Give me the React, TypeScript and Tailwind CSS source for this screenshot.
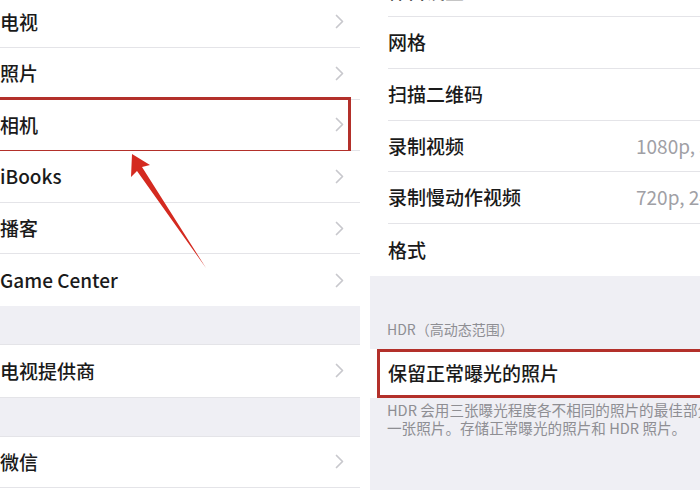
import React from "react";

const font = { fontFamily: '"Noto Sans CJK SC", "Noto Sans", sans-serif' };

function Chevron() {
  return (
    <svg width="9" height="15" viewBox="0 0 9 15" className="shrink-0">
      <polyline points="1.5,1.5 7.5,7.5 1.5,13.5" fill="none" stroke="#c8c8cd" strokeWidth="1.7" strokeLinecap="round" strokeLinejoin="round" />
    </svg>
  );
}

function LeftRow({ label, boxed = false, last = false }: { label: string; boxed?: boolean; last?: boolean }) {
  return (
    <div className={"relative flex h-[51.6px] items-center justify-between bg-white pr-[16px] " + (last ? "" : "border-b border-[#e4e4e8]")}>
      <span className="text-[19px] font-medium text-[#1a1a1a] whitespace-nowrap">{label}</span>
      <Chevron />
      {boxed && (
        <div className="absolute left-[-4px] right-[9px] top-[-3px] bottom-[-3px] border-[3px] border-[#b3302a]" />
      )}
    </div>
  );
}

function RightRow({ label, value }: { label: string; value?: string }) {
  return (
    <div className="flex h-[51.7px] items-center bg-white pl-[18px]">
      <div className="flex h-full flex-1 items-center border-b border-[#e4e4e8]">
        <span className="w-[248px] shrink-0 text-[19px] font-medium text-[#1a1a1a] whitespace-nowrap">{label}</span>
        {value && <span className="text-[19px] text-[#a0a0a5] whitespace-nowrap">{value}</span>}
      </div>
    </div>
  );
}

export default function App() {
  return (
    <div className="relative flex h-[490px] w-[700px] overflow-hidden bg-white" style={font}>
      {/* Left panel */}
      <div className="w-[360px] shrink-0 overflow-hidden">
        <div className="mt-[-3.5px] flex flex-col">
          <LeftRow label="电视" />
          <LeftRow label="照片" />
          <LeftRow label="相机" boxed />
          <LeftRow label="iBooks" />
          <LeftRow label="播客" />
          <LeftRow label="Game Center" last />
          <div className="h-[39px] bg-[#efeff4] border-b border-[#e4e4e8]" />
          <LeftRow label="电视提供商" last />
          <div className="h-[40px] bg-[#efeff4] border-t border-b border-[#e4e4e8]" />
          <LeftRow label="微信" />
        </div>
      </div>

      <div className="w-[10px] shrink-0 bg-white" />

      {/* Right panel */}
      <div className="flex-1 overflow-hidden bg-[#efeff4]">
        <div className="mt-[-34.5px] flex flex-col">
          <RightRow label="保留设置" />
          <RightRow label="网格" />
          <RightRow label="扫描二维码" />
          <RightRow label="录制视频" value="1080p, 30 fps" />
          <RightRow label="录制慢动作视频" value="720p, 240 fps" />
          <div className="flex h-[51.7px] items-center bg-white pl-[18px]">
            <span className="text-[19px] font-medium text-[#1a1a1a]">格式</span>
          </div>
          <div className="h-[73px] pl-[17px] pb-[9px] flex items-end">
            <span className="text-[14px] text-[#8e8e93] whitespace-nowrap">HDR（高动态范围）</span>
          </div>
          <div className="relative flex h-[49px] items-center bg-white pl-[18px]">
            <span className="text-[19px] font-medium text-[#1a1a1a] whitespace-nowrap">保留正常曝光的照片</span>
            <div className="absolute left-[7px] right-[-6px] top-0 bottom-0 border-[3px] border-[#b3302a]" />
          </div>
          <div className="flex flex-col pl-[17px] pt-[3px] text-[14.6px] leading-[18px] text-[#8e8e93]">
            <div className="h-[18px] whitespace-nowrap">HDR 会用三张曝光程度各不相同的照片的最佳部分合成为</div>
            <div className="h-[18px] whitespace-nowrap">一张照片。存储正常曝光的照片和 HDR 照片。</div>
          </div>
        </div>
      </div>

      {/* Arrow annotation */}
      <svg className="pointer-events-none absolute left-0 top-0" width="700" height="490">
        <polygon points="132,154 150,165 142,167 206,268 137,171 131,177" fill="#d42a20" />
      </svg>
    </div>
  );
}
